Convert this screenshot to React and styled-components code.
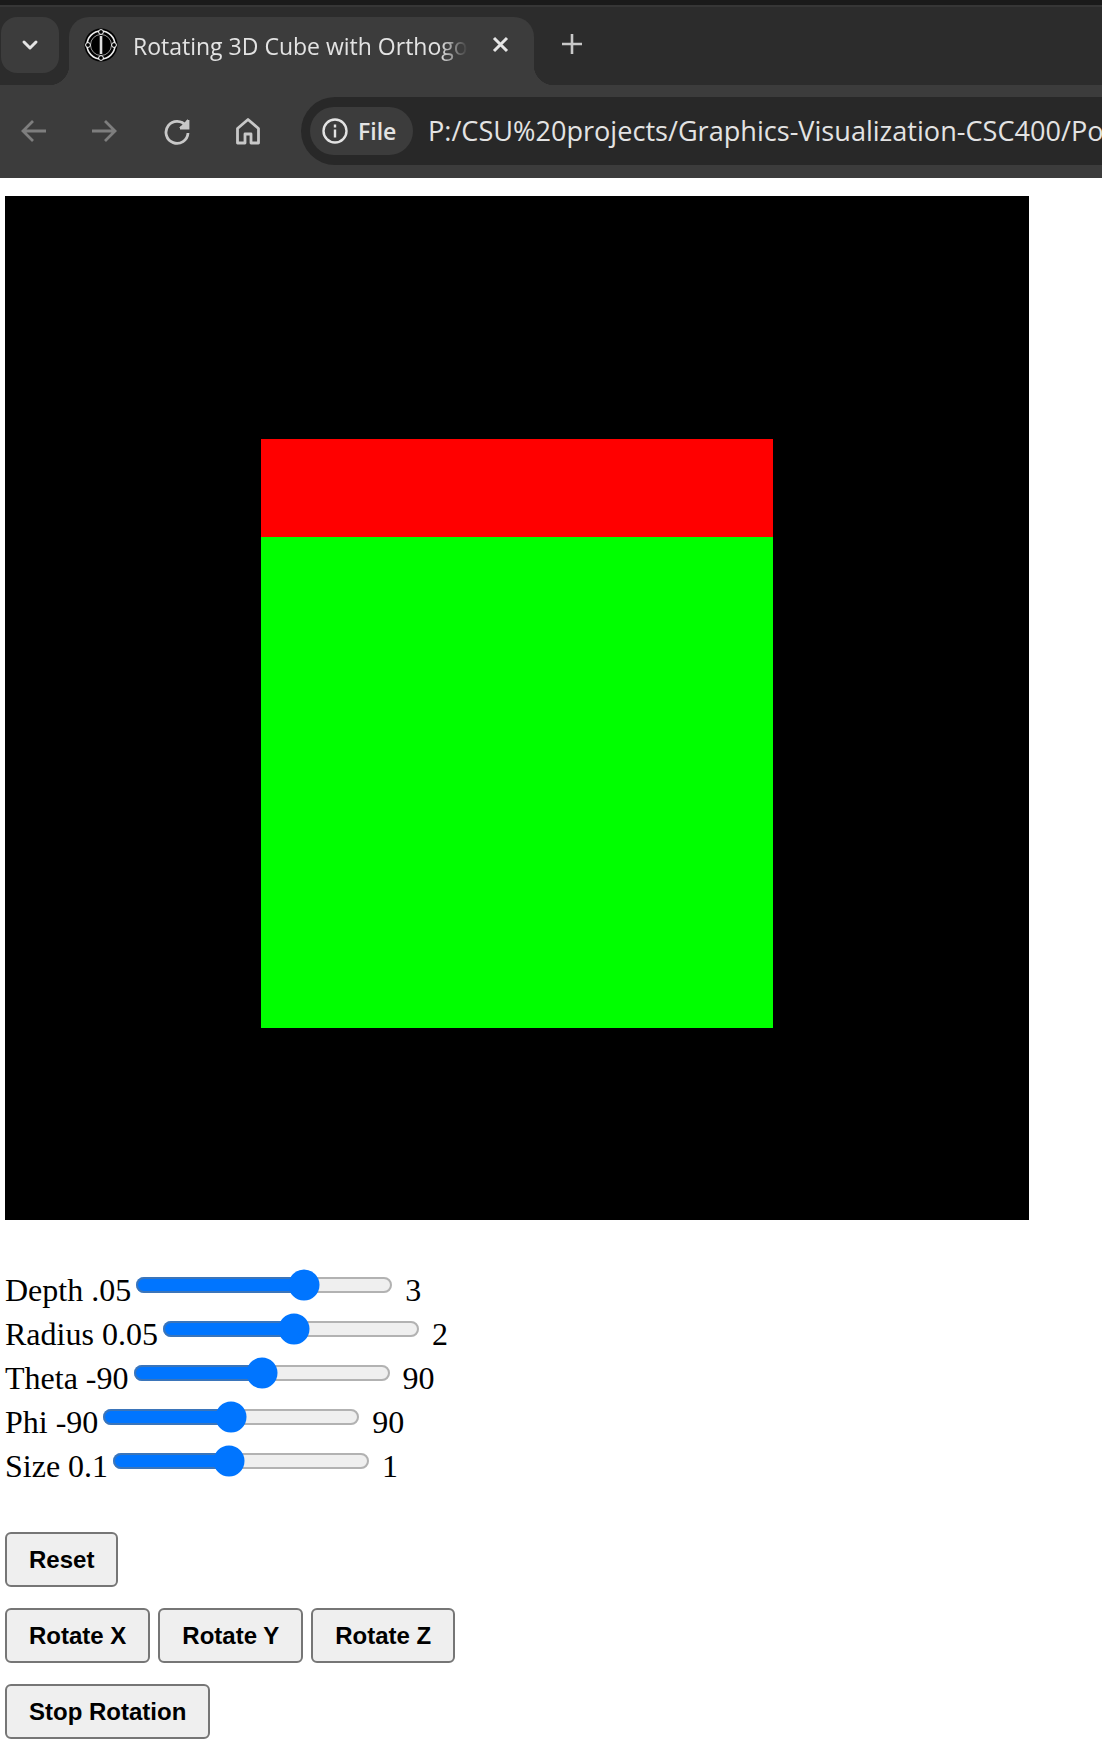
import React from "react";
import styled, { createGlobalStyle } from "styled-components";

const Global = createGlobalStyle`
  html, body { margin: 0; padding: 0; background: #fff; }
  body { width: 1102px; height: 1750px; overflow: hidden; font-family: "Liberation Serif", serif; }
`;

const UI = `"Open Sans", "Noto Sans", sans-serif`;

const Browser = styled.header`
  background: #1a1a1a;
  padding-top: 5px;
  width: 1102px;
  overflow: hidden;
`;
const TabStrip = styled.div`
  height: 80px;
  box-sizing: border-box;
  background: #2c2c2c;
  border-top: 2px solid #363636;
  padding-top: 10px;
  display: flex;
  align-items: flex-start;
`;
const TabSearch = styled.button`
  width: 58px;
  height: 56px;
  margin-left: 1px;
  padding: 0;
  border: 0;
  border-radius: 16px;
  background: #3c3c3c;
  color: #e4e4e4;
  display: flex;
  align-items: center;
  justify-content: center;
`;
const Tab = styled.div`
  position: relative;
  width: 465px;
  height: 68px;
  margin-left: 10px;
  box-sizing: border-box;
  padding: 0 22px 12px 15px;
  background: #3c3c3c;
  border-radius: 20px 20px 0 0;
  display: flex;
  align-items: center;
  color: #e3e3e3;
  &::before, &::after {
    content: "";
    position: absolute;
    bottom: 0;
    width: 20px;
    height: 20px;
  }
  &::before { left: -20px; background: radial-gradient(circle at 0 0, transparent 20px, #3c3c3c 20.5px); }
  &::after { right: -20px; background: radial-gradient(circle at 100% 0, transparent 20px, #3c3c3c 20.5px); }
`;
const TabTitle = styled.span`
  flex: 1;
  margin-left: 15px;
  padding-top: 2px;
  font: 400 23px/32px ${UI};
  white-space: nowrap;
  overflow: hidden;
  -webkit-mask-image: linear-gradient(to right, #000 calc(100% - 28px), transparent);
  mask-image: linear-gradient(to right, #000 calc(100% - 28px), transparent);
`;
const CloseIcon = styled.span`
  margin-left: 20px;
  display: flex;
  color: #e6e6e6;
`;
const NewTab = styled.span`
  margin: 13px 0 0 24px;
  display: flex;
  color: #c8c8c8;
`;
const Toolbar = styled.div`
  height: 93px;
  box-sizing: border-box;
  background: #3c3c3c;
  padding: 12px 0 13px 19px;
  display: flex;
  align-items: center;
`;
const NavButton = styled.span`
  width: 30px;
  height: 30px;
  margin-right: ${(p) => p.$gap}px;
  display: flex;
  align-items: center;
  justify-content: center;
  color: ${(p) => (p.$disabled ? "#7e7e7e" : "#c8c8c8")};
`;
const AddressBar = styled.div`
  flex: 1;
  height: 68px;
  min-width: 0;
  border-radius: 34px 0 0 34px;
  background: #282828;
  padding-left: 9px;
  display: flex;
  align-items: center;
  overflow: hidden;
`;
const SecurityChip = styled.div`
  height: 48px;
  width: 103px;
  flex: none;
  box-sizing: border-box;
  border-radius: 24px;
  background: #3c3c3c;
  padding-left: 11px;
  display: flex;
  align-items: center;
  gap: 9px;
  color: #e3e3e3;
  font: 600 23px/30px ${UI};
`;
const Url = styled.span`
  margin-left: 15px;
  padding-bottom: 1px;
  font: 400 27.1px/36px ${UI};
  color: #e3e3e3;
  white-space: nowrap;
`;

const Page = styled.main`
  padding: 18px 0 0 5px;
  font-size: 32px;
  color: #000;
`;
const Canvas = styled.svg`
  display: block;
  width: 1024px;
  height: 1024px;
  background: #000;
`;
const Controls = styled.form`
  margin-top: 45px;
`;
const ControlRow = styled.div`
  height: 44px;
  line-height: 44px;
  white-space: nowrap;
`;
const Slider = styled.input.attrs({ type: "range" })`
  zoom: 2;
  margin: 2px;
`;
const ButtonRows = styled.div`
  margin-top: 47px;
  display: flex;
  flex-direction: column;
  gap: 21px;
`;
const ButtonRow = styled.div`
  display: flex;
  gap: 8px;
`;
const Action = styled.button`
  height: 55px;
  box-sizing: border-box;
  padding: 0 22px;
  border: 2px solid #767676;
  border-radius: 6px;
  background: #efefef;
  color: #000;
  font: 700 24px "Liberation Sans", Arial, sans-serif;
`;

const Stroke = ({ size = 24, vb = 24, w = 2, children }) => (
  <svg width={size} height={size} viewBox={`0 0 ${vb} ${vb}`} fill="none" stroke="currentColor" strokeWidth={w}>
    {children}
  </svg>
);

const sliders = [
  ["Depth .05", 0.05, 3, 2.04, 0.01, "3"],
  ["Radius 0.05", 0.05, 2, 1.05, 0.01, "2"],
  ["Theta -90", -90, 90, 0, 1, "90"],
  ["Phi -90", -90, 90, 0, 1, "90"],
  ["Size 0.1", 0, 100, 44.5, 0.1, "1"],
];

export default function App() {
  return (
    <>
      <Global />
      <Browser>
        <TabStrip>
          <TabSearch aria-label="Search tabs">
            <Stroke size={24} w={3}><path d="M6 9l6 6 6-6" strokeLinecap="round" strokeLinejoin="round" /></Stroke>
          </TabSearch>
          <Tab>
            <svg width="34" height="34" viewBox="0 0 34 34">
              <circle cx="17" cy="17" r="16.5" fill="#000" />
              <circle cx="17" cy="17" r="14" fill="none" stroke="#eee" strokeWidth="1.6" />
              <circle cx="17" cy="17" r="10.5" fill="none" stroke="#999" strokeWidth="1" />
              <rect x="15.7" y="8" width="2.6" height="18" fill="#ddd" />
              <circle cx="17" cy="4" r="2.4" fill="#000" stroke="#fff" strokeWidth="1" />
              <circle cx="17" cy="30" r="2.4" fill="#000" stroke="#fff" strokeWidth="1" />
              <circle cx="4" cy="17" r="2.4" fill="#000" stroke="#fff" strokeWidth="1" />
              <circle cx="30" cy="17" r="2.4" fill="#000" stroke="#fff" strokeWidth="1" />
            </svg>
            <TabTitle>Rotating 3D Cube with Orthogonal</TabTitle>
            <CloseIcon>
              <Stroke size={24} w={3}><path d="M6 5l13 13M19 5L6 18" /></Stroke>
            </CloseIcon>
          </Tab>
          <NewTab>
            <Stroke size={28} w={2.6} vb={28}><path d="M14 4v20M4 14h20" /></Stroke>
          </NewTab>
        </TabStrip>
        <Toolbar>
          <NavButton $disabled $gap={40}>
            <Stroke size={30} vb={30} w={2.8}><path d="M27 15H4M14 5L4 15l10 10" /></Stroke>
          </NavButton>
          <NavButton $disabled $gap={43}>
            <Stroke size={30} vb={30} w={2.8}><path d="M3 15h23M16 5l10 10-10 10" /></Stroke>
          </NavButton>
          <NavButton $gap={41}>
            <Stroke size={30} vb={30} w={2.8}>
              <path d="M24 10a11 11 0 1 0 2 7" />
              <path d="M26 3v9h-9" fill="currentColor" stroke="none" />
              <path d="M26 4v8h-8" />
            </Stroke>
          </NavButton>
          <NavButton $gap={38}>
            <Stroke size={30} vb={30} w={2.8}>
              <path d="M15 3.5L4.5 12.5V27h7.5v-9h6v9h7.5V12.5z" strokeLinejoin="round" />
            </Stroke>
          </NavButton>
          <AddressBar>
            <SecurityChip>
              <Stroke size={28} vb={28} w={2.4}>
                <circle cx="14" cy="14" r="11.5" />
                <path d="M14 12.5v8M14 7.5v3" />
              </Stroke>
              File
            </SecurityChip>
            <Url>P:/CSU%20projects/Graphics-Visualization-CSC400/Portfolio</Url>
          </AddressBar>
        </Toolbar>
      </Browser>
      <Page>
        <Canvas viewBox="0 0 1024 1024">
          <rect x="256" y="243" width="512" height="98" fill="#f00" />
          <rect x="256" y="341" width="512" height="491" fill="#0f0" />
        </Canvas>
        <Controls>
          {sliders.map(([label, min, max, value, step, end]) => (
            <ControlRow key={label}>
              {label}
              <Slider min={min} max={max} step={step} defaultValue={value} /> {end}
            </ControlRow>
          ))}
        </Controls>
        <ButtonRows>
          <ButtonRow><Action type="button">Reset</Action></ButtonRow>
          <ButtonRow>
            <Action type="button">Rotate X</Action>
            <Action type="button">Rotate Y</Action>
            <Action type="button">Rotate Z</Action>
          </ButtonRow>
          <ButtonRow><Action type="button">Stop Rotation</Action></ButtonRow>
        </ButtonRows>
      </Page>
    </>
  );
}
